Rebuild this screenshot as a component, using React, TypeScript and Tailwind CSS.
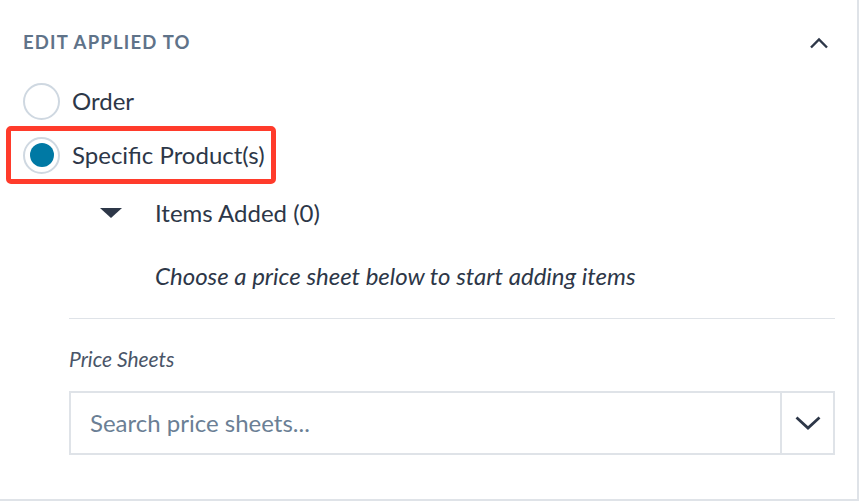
import React from "react";

export default function App() {
  return (
    <div className="w-[860px] h-[502px] bg-white" style={{ fontFamily: "Lato, 'Noto Sans', sans-serif" }}>
      <div className="w-[859px] h-[501px] border-r-2 border-b-2 border-[#dfe3e8] flex flex-col">
        <div className="flex items-center justify-between h-[30px] mt-[28px] pl-[23px] pr-[29px]">
          <span className="text-[18.5px] font-bold tracking-[0.065em] text-[#5f7389]">EDIT APPLIED TO</span>
          <svg width="18" height="12" viewBox="0 0 18 12" fill="none">
            <path d="M1 10.5 L9 2.5 L17 10.5" stroke="#2d3748" strokeWidth="2.4" />
          </svg>
        </div>
        <div className="flex items-center h-[38px] mt-[24px] pl-[23px]">
          <div className="w-[37px] h-[37px] rounded-full border-2 border-[#cfd8e1] bg-white" />
          <span className="ml-[12px] text-[24px] text-[#2d3748]">Order</span>
        </div>
        <div className="mt-[6px] ml-[6px] w-[270px] h-[58px] rounded-[5px] border-[5px] border-[#ff3b2b] flex items-center pl-[12px]">
          <div className="w-[37px] h-[37px] rounded-full border-2 border-[#cfd8e1] bg-white flex items-center justify-center">
            <div className="w-[24px] h-[24px] rounded-full bg-[#0079a4]" />
          </div>
          <span className="ml-[12px] text-[24px] text-[#2d3748] whitespace-nowrap">Specific Product(s)</span>
        </div>
        <div className="flex items-center h-[30px] mt-[14px] pl-[100px]">
          <svg width="22" height="10" viewBox="0 0 22 10">
            <path d="M0 0 L22 0 L11 10 Z" fill="#2d3748" />
          </svg>
          <span className="ml-[33px] text-[24px] text-[#2d3748]">Items Added (0)</span>
        </div>
        <div className="pl-[155px] mt-[33px] h-[30px] flex items-center">
          <span className="italic text-[24px] text-[#2d3748]">Choose a price sheet below to start adding items</span>
        </div>
        <div className="ml-[69px] mr-[22px] mt-[27px] border-t border-[#dfe3e8]" />
        <div className="ml-[69px] mt-[28px] h-[24px] flex items-center">
          <span className="italic text-[21px] text-[#4a5568]">Price Sheets</span>
        </div>
        <div className="ml-[69px] mr-[22px] mt-[20px] h-[64px] border-2 border-[#dfe3e8] flex">
          <div className="flex-1 flex items-center pl-[19px]">
            <span className="text-[24px] text-[#6b7f95]">Search price sheets...</span>
          </div>
          <div className="w-[53px] border-l-2 border-[#dfe3e8] flex items-center justify-center">
            <svg width="26" height="16" viewBox="0 0 26 16" fill="none">
              <path d="M1.5 2.5 L13 13 L24.5 2.5" stroke="#2d3748" strokeWidth="2.8" />
            </svg>
          </div>
        </div>
      </div>
    </div>
  );
}
